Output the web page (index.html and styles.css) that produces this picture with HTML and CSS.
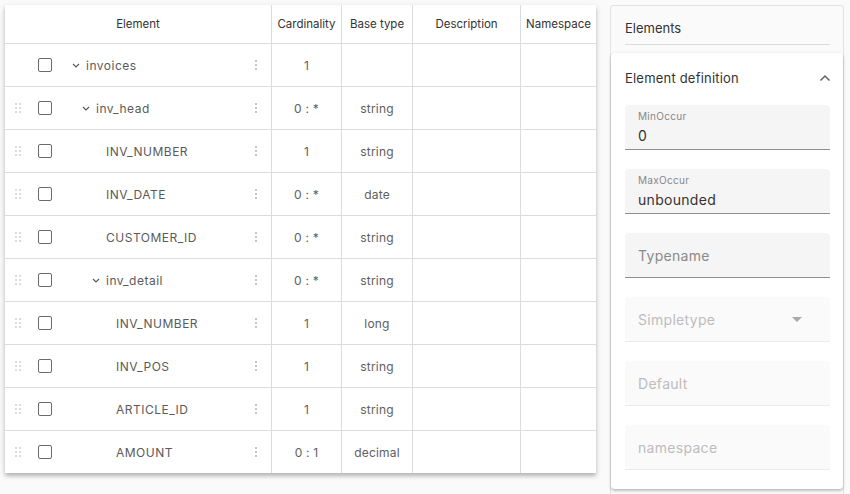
FILE: index.html
```html
<!DOCTYPE html>
<html lang="en">
<head>
  <meta charset="UTF-8">
  <title>Schema Editor</title>
  <link rel="stylesheet" href="styles.css">
</head>
<body>
  <div class="page">
    <div class="table-wrap">
      <table class="tree-table">
        <thead>
          <tr>
            <th class="col-element">Element</th>
            <th class="col-card">Cardinality</th>
            <th class="col-type">Base type</th>
            <th class="col-desc">Description</th>
            <th class="col-ns">Namespace</th>
          </tr>
        </thead>
        <tbody id="rows"></tbody>
      </table>
    </div>

    <div class="side">
      <div class="side-head">Elements</div>
      <div class="panel">
        <div class="panel-head">
          <span>Element definition</span>
          <svg class="chev-up" width="12" height="8" viewBox="0 0 12 8"><path d="M1.5 6.5 L6 2 L10.5 6.5" fill="none" stroke="#666" stroke-width="1.5"/></svg>
        </div>
        <div class="field">
          <div class="field-label">MinOccur</div>
          <div class="field-value">0</div>
        </div>
        <div class="field">
          <div class="field-label">MaxOccur</div>
          <div class="field-value">unbounded</div>
        </div>
        <div class="field field-empty">
          <div class="field-placeholder">Typename</div>
        </div>
        <div class="field field-empty disabled select">
          <div class="field-placeholder">Simpletype</div>
          <svg width="10" height="5" viewBox="0 0 10 5"><path d="M0 0 L10 0 L5 5 Z" fill="#aaa"/></svg>
        </div>
        <div class="field field-empty disabled">
          <div class="field-placeholder">Default</div>
        </div>
        <div class="field field-empty disabled">
          <div class="field-placeholder">namespace</div>
        </div>
      </div>
    </div>
  </div>

  <script>
    const rows = [
      { name: "invoices", level: 0, folder: true, card: "1", type: "", root: true },
      { name: "inv_head", level: 1, folder: true, card: "0 : *", type: "string" },
      { name: "INV_NUMBER", level: 2, card: "1", type: "string" },
      { name: "INV_DATE", level: 2, card: "0 : *", type: "date" },
      { name: "CUSTOMER_ID", level: 2, card: "0 : *", type: "string" },
      { name: "inv_detail", level: 2, folder: true, card: "0 : *", type: "string" },
      { name: "INV_NUMBER", level: 3, card: "1", type: "long" },
      { name: "INV_POS", level: 3, card: "1", type: "string" },
      { name: "ARTICLE_ID", level: 3, card: "1", type: "string" },
      { name: "AMOUNT", level: 3, card: "0 : 1", type: "decimal" }
    ];

    const handle = `<svg width="7" height="10" viewBox="0 0 7 10">
      <circle cx="1" cy="1" r="1"/><circle cx="5" cy="1" r="1"/>
      <circle cx="1" cy="5" r="1"/><circle cx="5" cy="5" r="1"/>
      <circle cx="1" cy="9" r="1"/><circle cx="5" cy="9" r="1"/></svg>`;
    const chevron = `<svg width="8" height="5" viewBox="0 0 8 5"><path d="M1 1 L4 4 L7 1" fill="none" stroke="#555" stroke-width="1.1"/></svg>`;

    const body = document.getElementById("rows");
    rows.forEach((r) => {
      const tr = document.createElement("tr");
      tr.innerHTML = `
        <td class="col-element">
          <div class="el-cell">
            <span class="drag">${r.root ? "" : handle}</span>
            <span class="check"></span>
            <span class="indent" style="width:${r.level * 10}px"></span>
            <span class="toggle">${r.folder ? chevron : ""}</span>
            <span class="el-name">${r.name}</span>
            <span class="kebab"><i></i><i></i><i></i></span>
          </div>
        </td>
        <td>${r.card}</td>
        <td>${r.type}</td>
        <td></td>
        <td></td>`;
      body.appendChild(tr);
    });
  </script>
</body>
</html>
```

FILE: styles.css
```css
body {
  margin: 0;
  background: #fafafa;
  font-family: Inter, 'Noto Sans', sans-serif;
  color: #444;
}
.page {
  display: flex;
  align-items: flex-start;
  gap: 14px;
  padding: 5px 0 0 5px;
  height: 489px;
  overflow: hidden;
}
.table-wrap {
  width: 591px;
  background: #fff;
  box-shadow: 0 3px 4px rgba(0,0,0,0.25), 0 1px 8px rgba(0,0,0,0.06);
}
.tree-table {
  width: 100%;
  border-collapse: collapse;
  table-layout: fixed;
  font-size: 12px;
}
.tree-table th,
.tree-table td {
  border: 1px solid #dcdcdc;
  text-align: center;
  padding: 0;
  font-weight: 400;
  color: #606060;
  letter-spacing: 0.2px;
}
.tree-table tr > :first-child { border-left: none; }
.tree-table tr > :last-child { border-right: none; }
.tree-table thead th {
  border-top: none;
  height: 38px;
  color: #333;
  font-size: 11.5px;
  letter-spacing: 0;
}
.tree-table tbody tr:last-child td { border-bottom: none; }
.tree-table td { height: 42px; }
.col-element { width: 266px; }
.col-card { width: 69px; }
.col-type { width: 70px; }
.col-desc { width: 107px; }
.el-cell {
  display: flex;
  align-items: center;
  height: 42px;
  padding-left: 10px;
}
.drag {
  width: 7px;
  height: 10px;
  display: flex;
  fill: #d0d0d0;
}
.check {
  width: 12px;
  height: 12px;
  border: 1.5px solid #6b6b6b;
  border-radius: 2px;
  margin-left: 16px;
}
.indent { flex-shrink: 0; }
.toggle {
  width: 14px;
  margin-left: 20px;
  display: flex;
  align-items: center;
}
.el-name {
  flex: 1;
  text-align: left;
  letter-spacing: 0.5px;
  color: #5a5a5a;
}
.kebab {
  display: flex;
  flex-direction: column;
  gap: 2px;
  margin-right: 14px;
}
.kebab i {
  width: 2px;
  height: 2px;
  background: #c4c4c4;
}
.side {
  width: 232px;
  height: 520px;
  border: 1px solid #e2e2e2;
  border-radius: 3px;
  background: #fafafa;
}
.side-head {
  margin: 0 13px 0 14px;
  height: 32px;
  display: flex;
  align-items: center;
  padding-top: 6px;
  border-bottom: 1px solid #dcdcdc;
  font-size: 13px;
  color: #333;
}
.panel {
  margin-top: 8px;
  background: #fff;
  border-radius: 4px;
  box-shadow: 0 2px 3px rgba(0,0,0,0.22), 0 0 4px rgba(0,0,0,0.06);
  padding: 0 13px 19px 14px;
  display: flex;
  flex-direction: column;
  gap: 19px;
}
.panel-head {
  height: 49px;
  margin-bottom: -16px;
  display: flex;
  align-items: center;
  justify-content: space-between;
  font-size: 13px;
  color: #333;
  letter-spacing: 0.2px;
}
.chev-up { margin-right: -1px; }
.field {
  height: 44px;
  background: #f5f5f5;
  border-radius: 4px 4px 0 0;
  border-bottom: 1px solid #8f8f8f;
  padding: 0 13px;
  display: flex;
  flex-direction: column;
  justify-content: center;
}
.field-label {
  font-size: 10px;
  color: #888;
  line-height: 12px;
  letter-spacing: 0.3px;
}
.field-value {
  font-size: 14px;
  color: #333;
  line-height: 19px;
  margin-top: 4px;
  letter-spacing: 0.3px;
}
.field-placeholder {
  font-size: 14px;
  color: #8a8a8a;
  letter-spacing: 0.3px;
}
.field.disabled {
  background: #fafafa;
  border-bottom: 1px solid #ececec;
}
.field.disabled .field-placeholder { color: #bdbdbd; }
.field.select {
  flex-direction: row;
  align-items: center;
  justify-content: space-between;
  padding-right: 28px;
}
```
